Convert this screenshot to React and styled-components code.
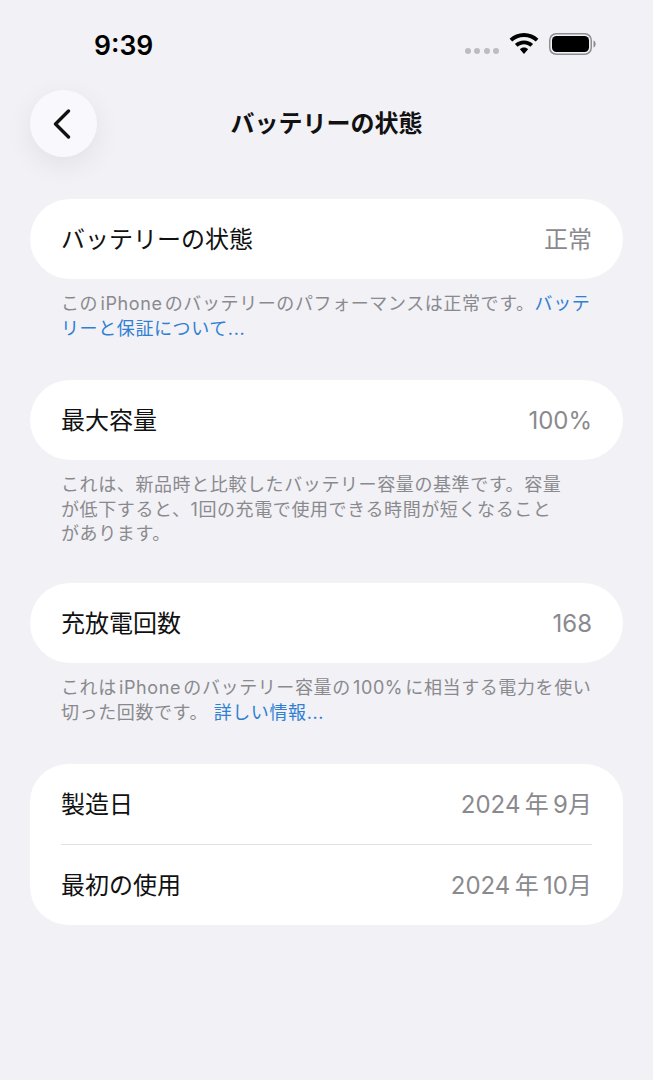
import React from "react";
import styled, { createGlobalStyle } from "styled-components";

const Global = createGlobalStyle`
  html, body { margin: 0; padding: 0; background: #f1f1f6; }
  body { font-family: Inter, "Noto Sans CJK JP", "Noto Sans", sans-serif; }
`;
const Page = styled.div`
  width: 653px; height: 1080px; overflow: hidden; background: #f1f1f6; display: flex; flex-direction: column;
`;
const StatusBar = styled.div`
  height: 90px; box-sizing: border-box; padding: 27px 57px 0 94px; display: flex; justify-content: space-between; align-items: flex-start;
`;
const Clock = styled.div`
  font: 600 26.5px/36px Inter, "Liberation Sans", sans-serif; color: #000;
`;
const StatusIcons = styled.div`
  display: flex; align-items: center; gap: 10px; height: 34px;
`;
const Dots = styled.div`
  display: flex; gap: 3.4px; margin-top: 14px;
`;
const Dot = styled.span`
  width: 6px; height: 6px; border-radius: 50%; background: #bdbdc1;
`;
const NavBar = styled.header`
  height: 67px; padding-left: 30px; position: relative; display: flex; align-items: center;
`;
const BackButton = styled.button`
  width: 67px; height: 67px; border: 0; border-radius: 50%; background: #f9f9fd; padding: 0 3px 0 0;
  display: flex; align-items: center; justify-content: center;
  box-shadow: 0 8px 28px rgba(0,0,0,0.07);
`;
const Title = styled.h1`
  position: absolute; left: 0; right: 0; top: 0; margin: 0; text-align: center; line-height: 67px;
  font-size: 24px; font-weight: 700; color: #111; pointer-events: none;
`;
const Content = styled.main`
  padding: 42px 30px 0; display: flex; flex-direction: column;
`;
const Card = styled.section`
  background: #fff; border-radius: ${p => p.$radius || 40}px; padding: 0 31px;
`;
const Row = styled.div`
  height: 80px; display: flex; align-items: center; justify-content: space-between;
  & + & { border-top: 1px solid #e0e0e4; }
`;
const Label = styled.span`
  font-size: 24px; color: #111; line-height: 30px; padding-top: 2px;
`;
const Value = styled.span`
  font-size: 24px; color: #8a8a8e; line-height: 30px; padding-top: 2px;
`;
const Note = styled.p`
  margin: 13px 0 0; padding: 0 31px; font-size: 18px; letter-spacing: 0.6px; line-height: 24.6px; height: ${p => p.$h}px; color: #8a8a8e; white-space: nowrap;
`;
const Link = styled.span`
  color: #2f7fd3;
`;

const Wifi = () => (
  <svg width="30" height="22" viewBox="0 0 30 22" fill="#000">
    <path d="M15 0C9.4 0 4.4 2.2.6 5.8l2.6 2.8C6.3 5.7 10.4 3.9 15 3.9s8.7 1.8 11.8 4.7l2.6-2.8C25.6 2.2 20.6 0 15 0z" />
    <path d="M15 7.4c-3.5 0-6.7 1.4-9.1 3.6l2.7 2.8c1.7-1.5 4-2.5 6.4-2.5s4.7 1 6.4 2.5l2.7-2.8C21.7 8.8 18.5 7.4 15 7.4z" />
    <path d="M15 14.6c-1.6 0-3 .6-4.1 1.6L15 21l4.1-4.8c-1.1-1-2.5-1.6-4.1-1.6z" />
  </svg>
);
const Battery = () => (
  <svg width="47" height="22" viewBox="0 0 47 22">
    <rect x="0.75" y="0.75" width="41.5" height="20.5" rx="6.5" fill="none" stroke="#8e8e92" strokeWidth="1.5" />
    <rect x="3" y="3" width="37" height="16" rx="4.5" fill="#000" />
    <path d="M44.5 7.5c1.4.5 2.2 2 2.2 3.5s-.8 3-2.2 3.5z" fill="#8e8e92" />
  </svg>
);

export default function App() {
  return (
    <Page>
      <Global />
      <StatusBar>
        <Clock>9:39</Clock>
        <StatusIcons>
          <Dots><Dot /><Dot /><Dot /><Dot /></Dots>
          <Wifi />
          <Battery />
        </StatusIcons>
      </StatusBar>
      <NavBar>
        <BackButton aria-label="戻る">
          <svg width="20" height="30" viewBox="0 0 20 30" fill="none" stroke="#111" strokeWidth="3.3" strokeLinecap="round" strokeLinejoin="round">
            <path d="M16.5 2 L3.5 15 L16.5 28" />
          </svg>
        </BackButton>
        <Title>バッテリーの状態</Title>
      </NavBar>
      <Content>
        <Card><Row><Label>バッテリーの状態</Label><Value>正常</Value></Row></Card>
        <Note $h={88}>この{"\u200a"}iPhone{"\u200a"}のバッテリーのパフォーマンスは正常です。<Link>バッテ<br />リーと保証について...</Link></Note>
        <Card><Row><Label>最大容量</Label><Value>100%</Value></Row></Card>
        <Note $h={110}>これは、新品時と比較したバッテリー容量の基準です。容量<br />が低下すると、1回の充電で使用できる時間が短くなること<br />があります。</Note>
        <Card><Row><Label>充放電回数</Label><Value>168</Value></Row></Card>
        <Note $h={88}>これは{"\u200a"}iPhone{"\u200a"}のバッテリー容量の{"\u200a"}100%{"\u200a"}に相当する電力を使い<br />切った回数です。 <Link>詳しい情報...</Link></Note>
        <Card $radius={38}>
          <Row><Label>製造日</Label><Value>2024{"\u2009"}年{"\u2009"}9月</Value></Row>
          <Row><Label>最初の使用</Label><Value>2024{"\u2009"}年{"\u2009"}10月</Value></Row>
        </Card>
      </Content>
    </Page>
  );
}
